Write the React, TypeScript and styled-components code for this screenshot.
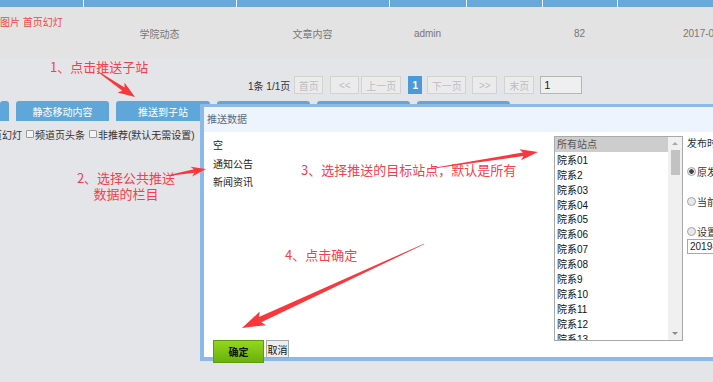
import styled, { createGlobalStyle } from "styled-components";

const GlobalStyle = createGlobalStyle`
  html, body {
    margin: 0;
    padding: 0;
  }
  body {
    background: #e4e5e9;
    font-family: "Liberation Sans", "Noto Sans CJK SC", sans-serif;
    font-size: 10px;
    overflow: hidden;
  }
`;

const Page = styled.div`
  position: relative;
  width: 713px;
  height: 382px;
  overflow: hidden;
  background: #e4e5e9;
`;

const HeaderStrip = styled.div`
  display: flex;
  height: 7px;
  background: #69a9d9;
`;

const HeaderCell = styled.div<{ $w: number }>`
  flex: none;
  width: ${(p) => p.$w}px;
  height: 100%;
  box-sizing: border-box;
  border-right: 1px solid #eef5fb;
`;

const TableRow = styled.div`
  display: grid;
  grid-template-columns: 83px 153px 153px 77px 76px 75px 1fr;
  height: 52px;
  background: #e3e3e3;
  color: #777;
  font-size: 10px;
`;

const Cell = styled.div<{ $left?: boolean }>`
  display: flex;
  align-items: center;
  justify-content: ${(p) => (p.$left ? "flex-start" : "center")};
  padding-left: ${(p) => (p.$left ? "66px" : "0")};
  white-space: nowrap;
  overflow: hidden;
`;

const TitleCell = styled.div`
  color: #f0474a;
  padding-top: 10px;
  white-space: nowrap;
  line-height: 12px;
`;

const PagerRow = styled.div`
  display: flex;
  align-items: center;
  height: 18px;
  margin-top: 17px;
  padding-left: 248px;
  color: #333;
  font-size: 10px;
`;

const PagerInfo = styled.span`
  margin-right: 4px;
  white-space: nowrap;
`;

const PageBtn = styled.div<{ $w: number; $ml: number; $active?: boolean }>`
  box-sizing: border-box;
  width: ${(p) => p.$w}px;
  height: 18px;
  margin-left: ${(p) => p.$ml}px;
  display: flex;
  align-items: center;
  justify-content: center;
  border: 1px solid ${(p) => (p.$active ? "#4a9ad8" : "#d2d2d2")};
  background: ${(p) => (p.$active ? "#4a9ad8" : "#ebebeb")};
  color: ${(p) => (p.$active ? "#fff" : "#bdbdbd")};
  font-weight: ${(p) => (p.$active ? "bold" : "normal")};
`;

const PageInput = styled.div`
  box-sizing: border-box;
  width: 42px;
  height: 18px;
  margin-left: 6px;
  border: 1px solid #b5b5b5;
  background: #efefef;
  color: #222;
  padding-left: 3px;
  line-height: 16px;
  font-size: 11px;
`;

const TabRow = styled.div`
  display: flex;
  align-items: flex-start;
  gap: 7px;
  height: 20px;
  margin-top: 7px;
`;

const Tab = styled.div<{ $w: number }>`
  flex: none;
  width: ${(p) => p.$w}px;
  height: 20px;
  background: #5fa6d9;
  border-radius: 3px 3px 0 0;
  color: #fff;
  display: flex;
  align-items: center;
  justify-content: center;
  white-space: nowrap;
`;

const TabGhost = styled.div`
  flex: none;
  width: 100px;
  height: 2px;
  margin: 3px 0 0 -4px;
  background: #b9bcc2;
`;

const CheckRow = styled.div`
  display: flex;
  align-items: center;
  height: 14px;
  margin: 6px 0 0 -8px;
  color: #333;
  font-size: 10px;
  white-space: nowrap;
`;

const Check = styled.span`
  display: inline-block;
  box-sizing: border-box;
  width: 8px;
  height: 8px;
  margin: 0 1px 0 4px;
  border: 1px solid #9a9a9a;
  border-radius: 1px;
  background: #f4f4f4;
`;

const Dialog = styled.div`
  position: absolute;
  left: 200px;
  top: 104px;
  width: 540px;
  height: 257px;
  box-sizing: border-box;
  border: 4px solid #8db9ea;
  border-top-width: 3px;
  border-right: none;
  background: #fff;
  display: flex;
  flex-direction: column;
`;

const DialogTitle = styled.div`
  height: 25px;
  flex: none;
  background: #eef4fd;
  color: #5b6b80;
  padding-left: 3px;
  line-height: 25px;
  font-size: 10px;
`;

const DialogBody = styled.div`
  flex: 1;
  display: grid;
  grid-template-columns: 350px 129px 1fr;
  min-height: 0;
`;

const ColumnList = styled.div`
  display: flex;
  flex-direction: column;
  padding: 5px 0 0 9px;
`;

const ColumnItem = styled.div`
  line-height: 18.6px;
  color: #222;
  font-size: 10px;
`;

const ButtonBar = styled.div`
  margin-top: auto;
  margin-bottom: -6px;
  display: flex;
  align-items: flex-start;
  gap: 2px;
`;

const OkButton = styled.div`
  box-sizing: border-box;
  width: 51px;
  height: 23px;
  border: 1px solid #5f9c0c;
  background: linear-gradient(#93d61d, #69b20c);
  color: #111;
  font-weight: bold;
  display: flex;
  align-items: center;
  justify-content: center;
`;

const CancelButton = styled.div`
  box-sizing: border-box;
  width: 23px;
  height: 18px;
  border: 1px solid #a8a8a8;
  background: #eeeeee;
  color: #111;
  display: flex;
  align-items: center;
  justify-content: center;
  font-size: 10px;
`;

const SiteSelect = styled.div`
  box-sizing: border-box;
  margin-top: 4px;
  height: 205px;
  border: 1px solid #a9a9a9;
  display: flex;
  background: #fff;
`;

const OptionList = styled.div`
  flex: 1;
  overflow: hidden;
`;

const SiteOption = styled.div<{ $selected?: boolean }>`
  height: 14.9px;
  line-height: 15px;
  padding-left: 2px;
  padding-top: ${(p) => (p.$selected ? "0" : "1px")};
  box-sizing: border-box;
  background: ${(p) => (p.$selected ? "#cdcdcd" : "transparent")};
  color: ${(p) => (p.$selected ? "#555" : "#111")};
  font-size: 10px;
  white-space: nowrap;
`;

const ScrollBar = styled.div`
  width: 14px;
  flex: none;
  background: #f0f0f0;
  display: flex;
  flex-direction: column;
  align-items: center;
`;

const ScrollArrow = styled.div<{ $down?: boolean }>`
  height: 13px;
  display: flex;
  align-items: center;
  justify-content: center;
  margin-top: ${(p) => (p.$down ? "auto" : "0")};
  &::after {
    content: "";
    border-left: 3px solid transparent;
    border-right: 3px solid transparent;
    ${(p) =>
      p.$down ? "border-top: 3px solid #8a8a8a;" : "border-bottom: 3px solid #a8a8a8;"}
  }
`;

const ScrollThumb = styled.div`
  width: 9px;
  height: 25px;
  background: #c2c2c2;
`;

const PublishColumn = styled.div`
  padding: 6px 0 0 4px;
  color: #333;
  font-size: 10px;
  white-space: nowrap;
  overflow: hidden;
`;

const PublishLabel = styled.div`
  line-height: 12px;
`;

const RadioRow = styled.div<{ $mt: number }>`
  display: flex;
  align-items: center;
  height: 12px;
  margin-top: ${(p) => p.$mt}px;
`;

const Radio = styled.span<{ $checked?: boolean }>`
  box-sizing: border-box;
  width: 9px;
  height: 9px;
  margin-right: 1px;
  border-radius: 50%;
  border: 1px solid #a5a5a5;
  background: ${(p) =>
    p.$checked
      ? "radial-gradient(circle, #444 0 2px, #e8e8e8 2.5px)"
      : "#e8e8e8"};
  flex: none;
`;

const DateInput = styled.div`
  box-sizing: border-box;
  margin-top: 2px;
  width: 60px;
  height: 15px;
  border: 1px solid #a9a9a9;
  padding-left: 2px;
  line-height: 13px;
  color: #222;
`;

const Note = styled.div<{ $x: number; $y: number; $w?: number }>`
  position: absolute;
  left: ${(p) => p.$x}px;
  top: ${(p) => p.$y}px;
  width: ${(p) => (p.$w ? `${p.$w}px` : "auto")};
  color: #f5404a;
  font-family: "Noto Sans CJK SC", sans-serif;
  font-size: 13px;
  line-height: 16px;
  text-align: center;
  white-space: nowrap;
`;

const Overlay = styled.svg`
  position: absolute;
  left: 0;
  top: 0;
  pointer-events: none;
`;

const arrowPoints = (
  x1: number,
  y1: number,
  x2: number,
  y2: number,
  head: number,
  hw: number,
  nw: number
) => {
  const dx = x2 - x1;
  const dy = y2 - y1;
  const len = Math.hypot(dx, dy);
  const ux = dx / len;
  const uy = dy / len;
  const px = -uy;
  const py = ux;
  const nx = x2 - ux * head;
  const ny = y2 - uy * head;
  const bx = nx - ux * 3;
  const by = ny - uy * 3;
  const pts = [
    [x1 + px * 0.3, y1 + py * 0.3],
    [nx + px * nw, ny + py * nw],
    [bx + px * hw, by + py * hw],
    [x2, y2],
    [bx - px * hw, by - py * hw],
    [nx - px * nw, ny - py * nw],
    [x1 - px * 0.3, y1 - py * 0.3],
  ];
  return pts.map((p) => `${p[0].toFixed(1)},${p[1].toFixed(1)}`).join(" ");
};

const headerCells = [84, 153, 153, 77, 76, 75, 200];

const pagerButtons = [
  { label: "首页", w: 29, ml: 0 },
  { label: "<<", w: 29, ml: 7 },
  { label: "上一页", w: 40, ml: 2 },
  { label: "1", w: 14, ml: 7, active: true },
  { label: "下一页", w: 39, ml: 5 },
  { label: ">>", w: 25, ml: 6 },
  { label: "末页", w: 30, ml: 7 },
];

const sites = [
  "院系01",
  "院系2",
  "院系03",
  "院系04",
  "院系05",
  "院系06",
  "院系07",
  "院系08",
  "院系9",
  "院系10",
  "院系11",
  "院系12",
  "院系13",
];

const App = () => {
  return (
    <Page>
      <GlobalStyle />
      <HeaderStrip>
        {headerCells.map((w, i) => (
          <HeaderCell key={i} $w={w} />
        ))}
      </HeaderStrip>
      <TableRow>
        <TitleCell>图片 首页幻灯</TitleCell>
        <Cell>学院动态</Cell>
        <Cell>文章内容</Cell>
        <Cell>admin</Cell>
        <Cell />
        <Cell>82</Cell>
        <Cell $left>2017-03-08 10:26</Cell>
      </TableRow>

      <PagerRow>
        <PagerInfo>1条 1/1页</PagerInfo>
        {pagerButtons.map((b) => (
          <PageBtn key={b.label} $w={b.w} $ml={b.ml} $active={b.active}>
            {b.label}
          </PageBtn>
        ))}
        <PageInput>1</PageInput>
      </PagerRow>

      <TabRow>
        <Tab $w={9} />
        <Tab $w={93}>静态移动内容</Tab>
        <Tab $w={94}>推送到子站</Tab>
        <Tab $w={93} />
        <Tab $w={93} />
        <Tab $w={93} />
        <TabGhost />
      </TabRow>

      <CheckRow>
        页幻灯
        <Check />
        频道页头条
        <Check />
        非推荐(默认无需设置)
      </CheckRow>

      <Dialog>
        <DialogTitle>推送数据</DialogTitle>
        <DialogBody>
          <ColumnList>
            <ColumnItem>空</ColumnItem>
            <ColumnItem>通知公告</ColumnItem>
            <ColumnItem>新闻资讯</ColumnItem>
            <ButtonBar>
              <OkButton>确定</OkButton>
              <CancelButton>取消</CancelButton>
            </ButtonBar>
          </ColumnList>
          <SiteSelect>
            <OptionList>
              <SiteOption $selected>所有站点</SiteOption>
              {sites.map((s) => (
                <SiteOption key={s}>{s}</SiteOption>
              ))}
            </OptionList>
            <ScrollBar>
              <ScrollArrow />
              <ScrollThumb />
              <ScrollArrow $down />
            </ScrollBar>
          </SiteSelect>
          <PublishColumn>
            <PublishLabel>发布时间</PublishLabel>
            <RadioRow $mt={15}>
              <Radio $checked />
              原发布时间
            </RadioRow>
            <RadioRow $mt={18}>
              <Radio />
              当前时间
            </RadioRow>
            <RadioRow $mt={18}>
              <Radio />
              设置时间
            </RadioRow>
            <DateInput>2019-01-01</DateInput>
          </PublishColumn>
        </DialogBody>
      </Dialog>

      <Note $x={50} $y={59}>
        1、点击推送子站
      </Note>
      <Note $x={74} $y={170} $w={104}>
        2、选择公共推送
        <br />
        数据的栏目
      </Note>
      <Note $x={301} $y={162}>
        3、选择推送的目标站点，默认是所有
      </Note>
      <Note $x={285} $y={247}>
        4、点击确定
      </Note>

      <Overlay width={713} height={382} viewBox="0 0 713 382">
        <g fill="#f8383c">
          <polygon points={arrowPoints(97, 71, 135, 97, 14, 6, 2)} />
          <polygon points={arrowPoints(166, 176, 206, 169, 12, 5, 1.8)} />
          <polygon points={arrowPoints(428, 169, 538, 152, 15, 5.5, 1.8)} />
          <polygon points={arrowPoints(424, 244, 242, 328, 20, 7.5, 2.8)} />
        </g>
      </Overlay>
    </Page>
  );
};

export default App;
